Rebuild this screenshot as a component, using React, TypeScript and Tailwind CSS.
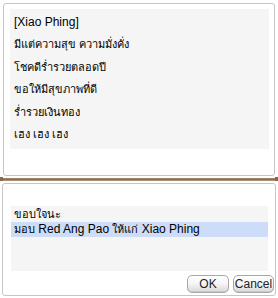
import React from 'react';

const lines = [
  { t: '[Xiao Phing]', th: false },
  { t: 'มีแต่ความสุข ความมั่งคั่ง', th: true },
  { t: 'โชคดีร่ำรวยตลอดปี', th: true },
  { t: 'ขอให้มีสุขภาพที่ดี', th: true },
  { t: 'ร่ำรวยเงินทอง', th: true },
  { t: 'เฮง เฮง เฮง', th: true },
];

const font = { fontFamily: '"Liberation Sans", "DejaVu Sans", "Noto Sans", sans-serif' };

const Btn: React.FC<{ label: string; w: string }> = ({ label, w }) => (
  <button
    className={`${w} h-[18px] rounded-[5px] border border-[#a8a8a8] bg-gradient-to-b from-white via-[#f4f4f4] to-[#d8d8d8] text-[12px] leading-none text-[#222] flex items-center justify-center shadow-[inset_0_-1px_0_#c8c8c8]`}
  >
    {label}
  </button>
);

export default function App() {
  return (
    <div className="w-[278px] h-[298px] bg-white flex flex-col text-black" style={font}>
      {/* top message panel */}
      <div className="mx-[3px] mt-[3px] h-[173px] border border-[#c6c6c6] rounded-[3px] pl-[6px] pr-[5px] pt-[5px]">
        <div className="h-[140px] bg-[#f5f5f5] pl-[4px] pt-[2px]">
          {lines.map((l) => (
            <div
              key={l.t}
              className={`${l.th ? 'text-[11px]' : 'text-[12px]'} h-[22.4px] leading-[22.4px] whitespace-nowrap`}
            >
              {l.t}
            </div>
          ))}
        </div>
      </div>

      {/* brown divider */}
      <div className="mt-[1px] h-[4px] flex items-center">
        <div className="w-[3px] h-[4px] bg-[#8a6a4c]" />
        <div className="flex-1 h-[3px] bg-gradient-to-b from-[#a88c6e] via-[#8c7056] to-[#b8a28a]" />
        <div className="w-[3px] h-[4px] bg-[#8a6a4c]" />
      </div>

      {/* bottom reply panel */}
      <div className="mx-[2px] mt-[2px] h-[113px] border border-[#c6c6c6] rounded-[3px] pl-[8px] pr-[7px] pt-[22px] flex flex-col">
        <div className="h-[65px] bg-[#f5f5f5] pt-[1px]">
          <div className="pl-[3px] text-[11px] h-[15px] leading-[15px] whitespace-nowrap">ขอบใจนะ</div>
          <div className="pl-[3px] text-[12px] h-[15px] leading-[15px] whitespace-nowrap bg-[#cddcf9]">
            <span className="text-[11px]">มอบ</span> Red Ang Pao <span className="text-[11px]">ให้แก่</span> Xiao Phing
          </div>
        </div>
        <div className="mt-[4px] -mr-[6px] flex justify-end gap-[4px]">
          <Btn label="OK" w="w-[42px]" />
          <Btn label="Cancel" w="w-[41px]" />
        </div>
      </div>
    </div>
  );
}
